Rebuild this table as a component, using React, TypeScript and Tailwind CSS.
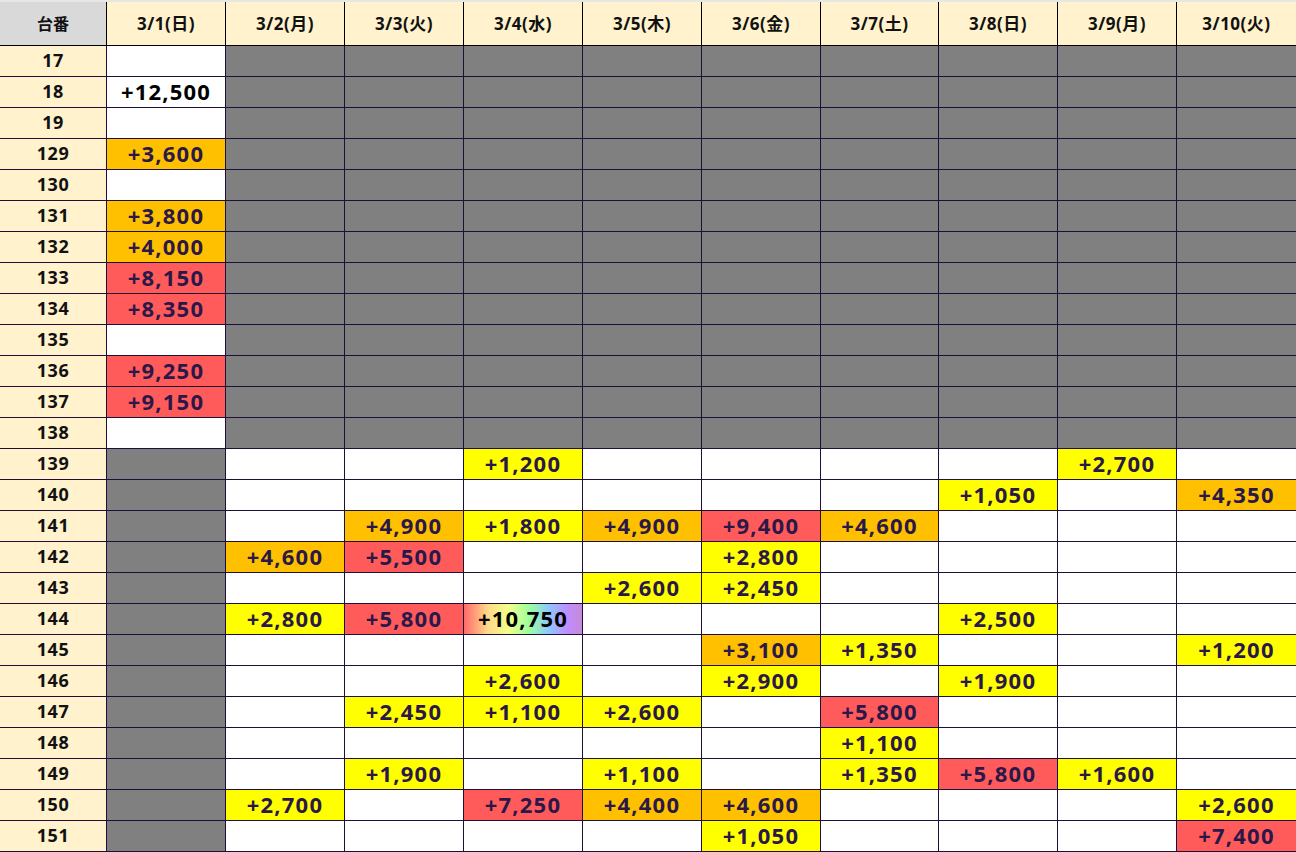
import React from 'react';

// y = yellow, o = orange, r = red, w = white w/ value, x = rainbow, g = gray, '' = empty
const dates = ['3/1(日)', '3/2(月)', '3/3(火)', '3/4(水)', '3/5(木)', '3/6(金)', '3/7(土)', '3/8(日)', '3/9(月)', '3/10(火)'];

const G = 'g';
const grayRest = [G, G, G, G, G, G, G, G, G];

const rows: { no: string; cells: string[] }[] = [
  { no: '17', cells: ['', ...grayRest] },
  { no: '18', cells: ['w:+12,500', ...grayRest] },
  { no: '19', cells: ['', ...grayRest] },
  { no: '129', cells: ['o:+3,600', ...grayRest] },
  { no: '130', cells: ['', ...grayRest] },
  { no: '131', cells: ['o:+3,800', ...grayRest] },
  { no: '132', cells: ['o:+4,000', ...grayRest] },
  { no: '133', cells: ['r:+8,150', ...grayRest] },
  { no: '134', cells: ['r:+8,350', ...grayRest] },
  { no: '135', cells: ['', ...grayRest] },
  { no: '136', cells: ['r:+9,250', ...grayRest] },
  { no: '137', cells: ['r:+9,150', ...grayRest] },
  { no: '138', cells: ['', ...grayRest] },
  { no: '139', cells: [G, '', '', 'y:+1,200', '', '', '', '', 'y:+2,700', ''] },
  { no: '140', cells: [G, '', '', '', '', '', '', 'y:+1,050', '', 'o:+4,350'] },
  { no: '141', cells: [G, '', 'o:+4,900', 'y:+1,800', 'o:+4,900', 'r:+9,400', 'o:+4,600', '', '', ''] },
  { no: '142', cells: [G, 'o:+4,600', 'r:+5,500', '', '', 'y:+2,800', '', '', '', ''] },
  { no: '143', cells: [G, '', '', '', 'y:+2,600', 'y:+2,450', '', '', '', ''] },
  { no: '144', cells: [G, 'y:+2,800', 'r:+5,800', 'x:+10,750', '', '', '', 'y:+2,500', '', ''] },
  { no: '145', cells: [G, '', '', '', '', 'o:+3,100', 'y:+1,350', '', '', 'y:+1,200'] },
  { no: '146', cells: [G, '', '', 'y:+2,600', '', 'y:+2,900', '', 'y:+1,900', '', ''] },
  { no: '147', cells: [G, '', 'y:+2,450', 'y:+1,100', 'y:+2,600', '', 'r:+5,800', '', '', ''] },
  { no: '148', cells: [G, '', '', '', '', '', 'y:+1,100', '', '', ''] },
  { no: '149', cells: [G, '', 'y:+1,900', '', 'y:+1,100', '', 'y:+1,350', 'r:+5,800', 'y:+1,600', ''] },
  { no: '150', cells: [G, 'y:+2,700', '', 'r:+7,250', 'o:+4,400', 'o:+4,600', '', '', '', 'y:+2,600'] },
  { no: '151', cells: [G, '', '', '', '', 'y:+1,050', '', '', '', 'r:+7,400'] },
];

const styles: Record<string, string> = {
  g: 'bg-[#808080]',
  '': 'bg-white',
  w: 'bg-white text-black',
  y: 'bg-[#ffff00] text-[#2a1848]',
  o: 'bg-[#ffc000] text-[#2a1848]',
  r: 'bg-[#ff5b5b] text-[#2a1848]',
  x: 'bg-[linear-gradient(90deg,#ff6a6a_0%,#ffd98a_20%,#f4ff8a_38%,#9dff9d_55%,#8ec8ff_72%,#c08cff_88%,#c68ad6_100%)] text-black',
};

function Cell({ spec }: { spec: string }) {
  const [kind, value] = spec.includes(':') ? spec.split(':') : [spec, ''];
  return (
    <div
      className={`h-[31px] pb-[3px] border-r border-b border-[#1e0f38] flex items-center justify-center text-[22px] font-bold tracking-[1.2px] leading-none ${styles[kind]}`}
    >
      {value}
    </div>
  );
}

export default function App() {
  return (
    <div className="w-[1296px] h-[852px] overflow-hidden bg-white border-t-2 border-[#e6e6e6] font-['Noto_Sans','Noto_Sans_CJK_JP',sans-serif]">
      <div className="grid grid-cols-[107px_119px_119px_119px_119px_119px_119px_118px_119px_119px_120px]">
        {/* header */}
        <div className="h-[44px] bg-[#d9d9d9] border-r border-b border-black flex items-center justify-center text-[16px] font-bold text-[#111]">
          台番
        </div>
        {dates.map((d) => (
          <div
            key={d}
            className="h-[44px] bg-[#fff2cc] border-r border-b border-black flex items-center justify-center text-[17px] font-bold text-[#111] tracking-[0.5px]"
          >
            {d}
          </div>
        ))}

        {/* body */}
        {rows.map((row) => (
          <React.Fragment key={row.no}>
            <div className="h-[31px] pb-[2px] bg-[#fff2cc] border-r border-b border-[#1e0f38] flex items-center justify-center text-[18px] font-bold text-[#111] tracking-[0.5px]">
              {row.no}
            </div>
            {row.cells.map((c, i) => (
              <Cell key={i} spec={c} />
            ))}
          </React.Fragment>
        ))}
      </div>
    </div>
  );
}
